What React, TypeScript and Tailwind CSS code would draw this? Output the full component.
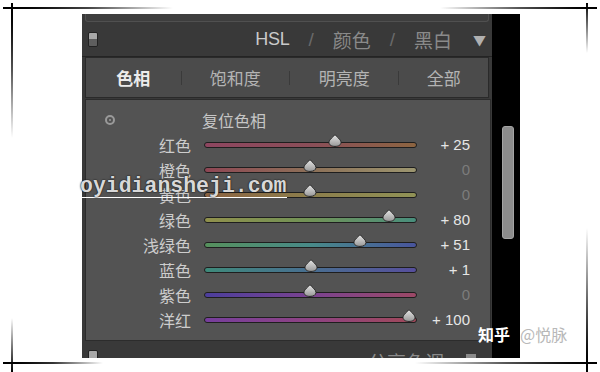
import React from "react";

const rows = [
  { label: "红色", value: 25, track: "bg-linear-to-r from-[#8e4660] via-[#8a4e58] to-[#8c6440]" },
  { label: "橙色", value: 0, track: "bg-linear-to-r from-[#8e4654] via-[#8c7058] to-[#9c9670]" },
  { label: "黄色", value: 0, track: "bg-linear-to-r from-[#8c6442] via-[#8c7e4c] to-[#909256]" },
  { label: "绿色", value: 80, track: "bg-linear-to-r from-[#90904c] via-[#709256] to-[#488e7c]" },
  { label: "浅绿色", value: 51, track: "bg-linear-to-r from-[#56905c] via-[#488a88] to-[#48549c]" },
  { label: "蓝色", value: 1, track: "bg-linear-to-r from-[#3e8a7a] via-[#486e90] to-[#564e9c]" },
  { label: "紫色", value: 0, track: "bg-linear-to-r from-[#4c3e9c] via-[#7a4290] to-[#9c4866]" },
  { label: "洋红", value: 100, track: "bg-linear-to-r from-[#763e9c] via-[#8e4282] to-[#a04858]" },
];

const tabs = [
  { name: "色相", w: "w-[96px]", active: true },
  { name: "饱和度", w: "w-[109px]", active: false },
  { name: "明亮度", w: "w-[110px]", active: false },
  { name: "全部", w: "w-[90px]", active: false },
];

const cjk = "font-['Noto_Sans_CJK_SC','Noto_Sans',sans-serif]";

function Thumb({ value }: { value: number }) {
  const center = 106 + value * 0.99;
  return (
    <svg
      className="absolute top-[-8px]"
      style={{ left: center - 7 }}
      width="14"
      height="13"
      viewBox="0 0 14 13"
    >
      <defs>
        <linearGradient id={`th${value}`} x1="0" y1="0" x2="0" y2="1">
          <stop offset="0" stopColor="#e6e6e6" />
          <stop offset="1" stopColor="#989898" />
        </linearGradient>
      </defs>
      <path
        d="M7 0.6 C8.2 2.6 13 5.4 13 8.4 C13 11 10.4 12.4 7 12.4 C3.6 12.4 1 11 1 8.4 C1 5.4 5.8 2.6 7 0.6 Z"
        fill={`url(#th${value})`}
        stroke="#262626"
        strokeWidth="1"
      />
    </svg>
  );
}

function Toggle() {
  return (
    <div className="w-[10px] h-[15px] flex flex-col border border-[#222] rounded-[2px] overflow-hidden">
      <div className="flex-1 bg-[#a8a8a8]" />
      <div className="flex-1 bg-[#5e5e5e]" />
    </div>
  );
}

export default function App() {
  return (
    <div className="relative w-[600px] h-[372px] bg-white overflow-hidden">
      {/* panel */}
      <div className="pt-[14px] pl-[82px]">
        <div className="w-[438px] h-[344px] flex bg-[#1c1c1c]">
          <div className="w-[410px] flex flex-col bg-[#393939]">
            {/* top strip */}
            <div className="h-[8px] mx-[3px] bg-[#3e3e3e] border-x border-b border-[#505050] rounded-b-[3px]" />
            {/* header */}
            <div className="h-[35px] flex items-center pl-[6px] pr-[6px] border-b border-[#242424]">
              <Toggle />
              <div className={`ml-auto flex items-center gap-[19px] text-[19px] leading-none ${cjk}`}>
                <span className="text-[#cacaca] font-['Liberation_Sans',sans-serif] text-[18px] tracking-[-0.3px]">HSL</span>
                <span className="text-[#6a6a6a] font-['Liberation_Sans',sans-serif]">/</span>
                <span className="text-[#8a8a8a]">颜色</span>
                <span className="text-[#6a6a6a] font-['Liberation_Sans',sans-serif]">/</span>
                <span className="text-[#8a8a8a]">黑白</span>
                <span className="text-[#b0b0b0] text-[13px] ml-[2px]">▼</span>
              </div>
            </div>
            {/* tabs */}
            <div className={`h-[41px] mx-[3px] flex items-center bg-[#4b4b4b] border border-[#2a2a2a] ${cjk}`}>
              {tabs.map((t, i) => (
                <React.Fragment key={t.name}>
                  {i > 0 && <div className="w-px h-[14px] bg-[#3a3a3a]" />}
                  <div
                    className={`${t.w} text-center text-[17px] leading-none ${
                      t.active ? "text-[#ececec] font-bold" : "text-[#b4b4b4]"
                    }`}
                  >
                    {t.name}
                  </div>
                </React.Fragment>
              ))}
            </div>
            {/* content */}
            <div className={`h-[242px] mt-[1px] ml-[3px] mr-[1px] bg-[#535353] border border-[#2c2c2c] pt-[7px] ${cjk}`}>
              <div className="h-[25px] flex items-center">
                <div className="w-[19px]" />
                <div className="w-[10px] h-[10px] rounded-full border-2 border-[#9a9a9a] flex items-center justify-center">
                  <div className="w-[2px] h-[2px] rounded-full bg-[#9a9a9a]" />
                </div>
                <span className="ml-[87px] text-[16px] text-[#c6c6c6] leading-none">复位色相</span>
              </div>
              {rows.map((r) => (
                <div key={r.label} className="h-[25px] flex items-center">
                  <div className="w-[105px] text-right text-[16px] leading-none text-[#cdcdcd]">{r.label}</div>
                  <div className="ml-[13px] w-[213px] relative">
                    <div className={`h-[6px] rounded-full border border-[#1e1e1e] ${r.track}`} />
                    <Thumb value={r.value} />
                  </div>
                  <div
                    className={`w-[53px] text-right text-[15px] leading-none font-['Liberation_Sans',sans-serif] ${
                      r.value ? "text-[#e6e6e6]" : "text-[#7c7c7c]"
                    }`}
                  >
                    {r.value ? `+ ${r.value}` : "0"}
                  </div>
                </div>
              ))}
            </div>
            {/* next section, cut off */}
            <div className="flex-1 overflow-hidden flex items-start pl-[6px] pt-[9px]">
              <Toggle />
              <span className={`ml-[270px] mt-[2px] text-[19px] leading-none text-[#8a8a8a] ${cjk}`}>分享色调</span>
              <span className="ml-[22px] mt-[4px] w-[10px] h-[10px] bg-[#8a8a8a]" />
            </div>
          </div>
          {/* scrollbar column */}
          <div className="w-[28px] bg-black pl-[10px] pt-[112px]">
            <div className="w-[12px] h-[113px] rounded-[3px] bg-[#8c8c8c] border border-[#a4a4a4]" />
          </div>
        </div>
      </div>

      {/* watermark */}
      <div className="absolute left-[80px] top-[175px] w-[207px] border-b border-white font-['Liberation_Mono',monospace] font-bold text-[21.5px] leading-[22px] text-[#d8d8d8] [text-shadow:0_0_2px_#222,0_0_1px_#000]">
        oyidiansheji.com
      </div>
      <div className={`absolute left-[478px] top-[326px] flex items-center gap-[10px] text-[16px] leading-none ${cjk}`}>
        <span className="text-white font-bold">知乎</span>
        <span className="text-[#b8b8b8]">@悦脉</span>
      </div>

      {/* sketched frame */}
      <div className="absolute left-[3px] top-[7px] w-[170px] h-[2px] bg-linear-to-r from-black via-[#444] to-transparent" />
      <div className="absolute left-[440px] top-[7px] w-[157px] h-[2px] bg-linear-to-r from-transparent via-[#555] to-black" />
      <div className="absolute left-[11px] top-[3px] w-[2px] h-[135px] bg-linear-to-b from-black via-[#555] to-transparent" />
      <div className="absolute left-[11px] top-[318px] w-[2px] h-[54px] bg-linear-to-b from-transparent to-black" />
      <div className="absolute left-[586px] top-[3px] w-[2px] h-[50px] bg-linear-to-b from-black to-transparent" />
      <div className="absolute left-[586px] top-[228px] w-[2px] h-[144px] bg-linear-to-b from-transparent via-[#666] to-black" />
      <div className="absolute left-[3px] top-[362px] w-[100px] h-[2px] bg-linear-to-r from-black via-[#333] to-transparent" />
      <div className="absolute left-[415px] top-[362px] w-[182px] h-[2px] bg-linear-to-r from-transparent via-[#555] to-black" />
    </div>
  );
}
